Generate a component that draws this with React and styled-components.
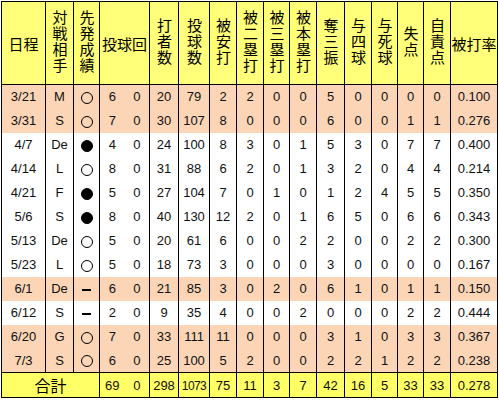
import styled, { createGlobalStyle } from "styled-components";

const GlobalStyle = createGlobalStyle`
  html, body {
    margin: 0;
    padding: 0;
    background: #ffffff;
  }
  body {
    font-family: "Liberation Sans", "Noto Sans CJK JP", sans-serif;
    color: #000000;
  }
`;

const Wrapper = styled.div`
  padding: 1px 0 0 1px;
`;

const Table = styled.table`
  table-layout: fixed;
  border-collapse: collapse;
  width: 497px;
  border: 1px solid #000;
`;

const HeadRow = styled.tr`
  height: 83px;
  background: #ffff7a;
`;

const HeadCell = styled.th`
  border: 1px solid #000;
  padding: 0;
  font-family: "Noto Sans CJK JP", sans-serif;
  font-weight: 400;
  font-size: 15px;
  line-height: 17px;
  text-align: center;
  vertical-align: middle;
  white-space: nowrap;
`;

const Vertical = styled.span`
  display: inline-block;
  writing-mode: vertical-rl;
  text-orientation: upright;
  letter-spacing: 1px;
  line-height: 16px;
`;

const Row = styled.tr`
  height: 24px;
  background: ${(props) => (props.$peach ? "#fbd5b5" : "#ffffff")};
`;

const Cell = styled.td`
  padding: 0;
  border-left: ${(props) => (props.$joinLeft ? "none" : "1px solid #000")};
  border-right: ${(props) => (props.$joinRight ? "none" : "1px solid #000")};
  font-size: 13px;
  color: #111;
  text-align: center;
  vertical-align: middle;
  white-space: nowrap;
  overflow: hidden;
`;

const TotalRow = styled.tr`
  height: 25px;
  background: #ffff66;
  border-top: 1px solid #000;
`;

const TotalLabel = styled.td`
  padding: 0;
  border: 1px solid #000;
  font-family: "Noto Sans CJK JP", sans-serif;
  font-size: 16px;
  text-align: center;
  vertical-align: middle;
`;

const Narrow = styled.span`
  display: inline-block;
  font-size: 12px;
  letter-spacing: -0.6px;
`;

const Mark = styled.span`
  display: inline-block;
  width: 12px;
  height: 12px;
  border-radius: 50%;
  border: 1px solid #000;
  box-sizing: border-box;
  background: ${(props) => (props.$filled ? "#000" : "transparent")};
  vertical-align: middle;
`;

const Dash = styled.span`
  display: inline-block;
  width: 9px;
  height: 2px;
  background: #000;
  vertical-align: middle;
`;

const widths = [44, 28, 26, 25, 25, 29, 31, 27, 27, 26, 27, 28, 27, 26, 26, 27, 47];

const headers = [
  { label: "日程", flat: true },
  { label: "対戦相手" },
  { label: "先発成績" },
  { label: "投球回", flat: true, span: 2 },
  { label: "打者数" },
  { label: "投球数" },
  { label: "被安打" },
  { label: "被二塁打" },
  { label: "被三塁打" },
  { label: "被本塁打" },
  { label: "奪三振" },
  { label: "与四球" },
  { label: "与死球" },
  { label: "失点" },
  { label: "自責点" },
  { label: "被打率", flat: true },
];

const games = [
  ["3/21", "M", "o", "6", "0", "20", "79", "2", "2", "0", "0", "5", "0", "0", "0", "0", "0.100", true],
  ["3/31", "S", "o", "7", "0", "30", "107", "8", "0", "0", "0", "6", "0", "0", "1", "1", "0.276", true],
  ["4/7", "De", "f", "4", "0", "24", "100", "8", "3", "0", "1", "5", "3", "0", "7", "7", "0.400"],
  ["4/14", "L", "o", "8", "0", "31", "88", "6", "2", "0", "1", "3", "2", "0", "4", "4", "0.214"],
  ["4/21", "F", "f", "5", "0", "27", "104", "7", "0", "1", "0", "1", "2", "4", "5", "5", "0.350"],
  ["5/6", "S", "f", "8", "0", "40", "130", "12", "2", "0", "1", "6", "5", "0", "6", "6", "0.343"],
  ["5/13", "De", "o", "5", "0", "20", "61", "6", "0", "0", "2", "2", "0", "0", "2", "2", "0.300"],
  ["5/23", "L", "o", "5", "0", "18", "73", "3", "0", "0", "0", "3", "0", "0", "0", "0", "0.167"],
  ["6/1", "De", "-", "6", "0", "21", "85", "3", "0", "2", "0", "6", "1", "0", "1", "1", "0.150", true],
  ["6/12", "S", "-", "2", "0", "9", "35", "4", "0", "0", "2", "0", "0", "0", "2", "2", "0.444"],
  ["6/20", "G", "o", "7", "0", "33", "111", "11", "0", "0", "0", "3", "1", "0", "3", "3", "0.367", true],
  ["7/3", "S", "o", "6", "0", "25", "100", "5", "2", "0", "0", "2", "2", "1", "2", "2", "0.238", true],
];

const totals = ["69", "0", "298", "1073", "75", "11", "3", "7", "42", "16", "5", "33", "33", "0.278"];

function Result({ value }) {
  if (value === "o") return <Mark />;
  if (value === "f") return <Mark $filled />;
  return <Dash />;
}

export default function App() {
  return (
    <Wrapper>
      <GlobalStyle />
      <Table>
        <colgroup>
          {widths.map((w, i) => (
            <col key={i} style={{ width: w }} />
          ))}
        </colgroup>
        <thead>
          <HeadRow>
            {headers.map((h) => (
              <HeadCell key={h.label} colSpan={h.span || 1}>
                {h.flat ? h.label : <Vertical>{h.label}</Vertical>}
              </HeadCell>
            ))}
          </HeadRow>
        </thead>
        <tbody>
          {games.map((g) => (
            <Row key={g[0]} $peach={g[17]}>
              <Cell>{g[0]}</Cell>
              <Cell>{g[1]}</Cell>
              <Cell>
                <Result value={g[2]} />
              </Cell>
              <Cell $joinRight>{g[3]}</Cell>
              <Cell $joinLeft>{g[4]}</Cell>
              {g.slice(5, 17).map((v, i) => (
                <Cell key={i}>{v}</Cell>
              ))}
            </Row>
          ))}
          <TotalRow>
            <TotalLabel colSpan={3}>合計</TotalLabel>
            <Cell $joinRight>{totals[0]}</Cell>
            <Cell $joinLeft>{totals[1]}</Cell>
            {totals.slice(2).map((v, i) => (
              <Cell key={i}>{v === "1073" ? <Narrow>{v}</Narrow> : v}</Cell>
            ))}
          </TotalRow>
        </tbody>
      </Table>
    </Wrapper>
  );
}
